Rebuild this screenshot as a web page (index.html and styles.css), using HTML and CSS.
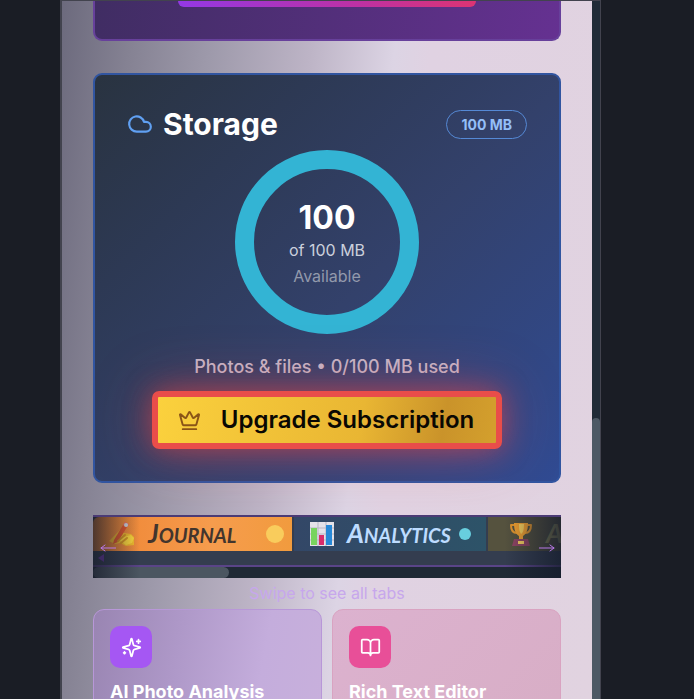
FILE: index.html
```html
<!DOCTYPE html>
<html lang="en">
<head>
<meta charset="utf-8">
<meta name="viewport" content="width=device-width, initial-scale=1">
<title>Storage</title>
<link rel="stylesheet" href="styles.css">
</head>
<body>
<div class="panel">
  <main class="content">
    <section class="promo"><div class="promo-bar"></div></section>

    <section class="storage">
      <header class="storage-head">
        <svg class="cloud" viewBox="0 0 24 24"><path d="M17.5 19H9a7 7 0 1 1 6.71-9h1.79a4.5 4.5 0 1 1 0 9Z"/></svg>
        <h2>Storage</h2>
        <span class="badge">100 MB</span>
      </header>
      <div class="ring">
        <strong>100</strong>
        <span class="ring-total">of 100 MB</span>
        <span class="ring-note">Available</span>
      </div>
      <p class="usage">Photos &amp; files • 0/100 MB used</p>
      <button class="upgrade" type="button">
        <svg class="crown" viewBox="0 0 24 24"><path d="M11.562 3.266a.5.5 0 0 1 .876 0L15.39 8.87a1 1 0 0 0 1.516.294L21.183 5.5a.5.5 0 0 1 .798.519l-2.834 10.246a1 1 0 0 1-.956.734H5.81a1 1 0 0 1-.957-.734L2.02 6.02a.5.5 0 0 1 .798-.519l4.276 3.664a1 1 0 0 0 1.516-.294z"/><path d="M5 21h14"/></svg>
        Upgrade Subscription
      </button>
    </section>

    <nav class="tabs">
      <div class="tab-row">
        <a class="tab journal" href="#journal">
          <svg class="emoji writing" viewBox="0 0 28 28"><path d="M2 21 9 14l4-4 4 3 7 1 3 3v8l-8 1-6-3-5 1z" fill="#f5bd2d"/><path d="m12 13 5 4 7-2 3 3-2 5-6 2-7-5z" fill="#ffd83c"/><path d="M7 20 16 5l4 2-9 15-5 2z" fill="#e8582d"/><path d="m16 5 2-3 4 2-2 3z" fill="#ef6c72"/><circle cx="19" cy="5" r="2" fill="#d5d9df"/><path d="m11 21 7-6M14 23l6-5" stroke="#db9722" stroke-width="2"/></svg>
          <span>Journal</span><i class="dot"></i>
        </a>
        <a class="tab analytics" href="#analytics">
          <svg class="emoji" viewBox="0 0 24 24"><path d="M0 0h24v24H0z" fill="#e4e2e9"/><path d="M8 0v24M16 0v24M0 6h24M0 12h24M0 18h24" stroke="#b9b6c5"/><path d="M1 6h6v17H1z" fill="#78d45e"/><path d="M9 13h5v10H9z" fill="#d92c6b"/><path d="M16 3h6v20h-6z" fill="#2889d8"/></svg>
          <span>Analytics</span><i class="dot"></i>
        </a>
        <a class="tab awards" href="#assets">
          <svg class="emoji" viewBox="0 0 24 24"><path d="M6 3H2c0 6 2 8 6 8M18 3h4c0 6-2 8-6 8" fill="none" stroke="#e6972d" stroke-width="2"/><path d="M5 1h14c0 8-2 11-5 13v4h-4v-4C7 12 5 9 5 1Z" fill="#f6a32f"/><path d="M10 2h5c0 6-1 9-3 10-2-3-2-6-2-10Z" fill="#ffd35a"/><path d="M5 17h14l2 7H3z" fill="#914563"/><path d="M9 19h6v3H9z" fill="#ffd460"/></svg>
          <span>As</span>
        </a>
      </div>
      <div class="tab-scroll"><div class="tab-thumb"></div></div>
      <div class="fade"></div>
      <svg class="arrow arrow-left" viewBox="0 0 16 8"><path d="M16 4H1m4-3L1 4l4 3"/></svg>
      <svg class="arrow arrow-right" viewBox="0 0 16 8"><path d="M0 4h15m-4-3 4 3-4 3"/></svg>
      <svg class="nudge" viewBox="0 0 6 8"><path d="M6 0v8L0 4z"/></svg>
    </nav>
    <p class="hint">Swipe to see all tabs</p>

    <div class="features">
      <article class="feature photo">
        <div class="tile"><svg viewBox="0 0 24 24"><path d="M9.937 15.5A2 2 0 0 0 8.5 14.063l-6.135-1.582a.5.5 0 0 1 0-.962L8.5 9.936A2 2 0 0 0 9.937 8.5l1.582-6.135a.5.5 0 0 1 .963 0L14.063 8.5A2 2 0 0 0 15.5 9.937l6.135 1.581a.5.5 0 0 1 0 .964L15.5 14.063a2 2 0 0 0-1.437 1.437l-1.582 6.135a.5.5 0 0 1-.963 0z"/><path d="M20 3v4M22 5h-4M4 17v2M5 18H3"/></svg></div>
        <h3>AI Photo Analysis</h3>
      </article>
      <article class="feature editor">
        <div class="tile"><svg viewBox="0 0 24 24"><path d="M12 7v14M3 18a1 1 0 0 1-1-1V4a1 1 0 0 1 1-1h5a4 4 0 0 1 4 4 4 4 0 0 1 4-4h5a1 1 0 0 1 1 1v13a1 1 0 0 1-1 1h-6a3 3 0 0 0-3 3 3 3 0 0 0-3-3z"/></svg></div>
        <h3>Rich Text Editor</h3>
      </article>
    </div>
  </main>
  <div class="scroll"><div class="scroll-thumb"></div></div>
</div>
</body>
</html>
```
FILE: styles.css
```css
* { box-sizing: border-box; }
body {
  margin: 0;
  padding: 0 93px 0 60px;
  height: 100vh;
  overflow: hidden;
  background: #1a1d25;
  font-family: Inter, "Liberation Sans", sans-serif;
  color: #fff;
}
h2, h3, p { margin: 0; }
svg { display: block; flex: none; fill: none; stroke-linecap: round; stroke-linejoin: round; }
.panel {
  display: flex;
  height: 100vh;
  border: solid #42434e;
  border-width: 1px 1px 0 2px;
  overflow: hidden;
}
.content {
  flex: 1;
  min-width: 0;
  padding: 0 31px;
  background: linear-gradient(96deg, #6c6a7d 0%, #858293 12%, #9d99aa 25%, #bdb4c6 42%, #dcd4e4 56%, #e0d2e2 62%, #e1d3e0 100%);
}
.scroll { width: 8px; padding-top: 417px; background: #202b37; }
.scroll-thumb { height: 100%; border-radius: 4px 4px 0 0; background: #4d5965; }

.promo {
  height: 40px;
  padding: 0 83px;
  border: 2px solid #67409b;
  border-top: 0;
  border-radius: 0 0 9px 9px;
  background: linear-gradient(100deg, #402d63, #653191);
}
.promo-bar { height: 6px; border-radius: 0 0 8px 8px; background: linear-gradient(90deg, #9338e5, #bd31a4 60%, #dc3473); }

.storage {
  display: flex;
  flex-direction: column;
  align-items: center;
  margin-top: 32px;
  padding: 31px 32px 32px;
  border: 2px solid #3155a0;
  border-radius: 9px;
  background: linear-gradient(135deg, #293340 0%, #2d3954 25%, #33416b 55%, #304b93 100%);
}
.storage-head { display: flex; align-items: center; align-self: stretch; height: 36px; }
.cloud { width: 26px; height: 26px; stroke: #60a0f2; stroke-width: 2; }
h2 { margin-left: 10px; font-size: 30px; line-height: 36px; font-weight: 700; }
.badge {
  margin-left: auto;
  padding: 0 14px;
  border: 1px solid #5589d5;
  border-radius: 15px;
  font-size: 14px;
  line-height: 27px;
  font-weight: 700;
  color: #94bff8;
}
.ring {
  display: flex;
  flex-direction: column;
  align-items: center;
  justify-content: center;
  width: 184px;
  height: 184px;
  margin-top: 8px;
  padding-top: 4px;
  border: 19px solid #33b4d4;
  border-radius: 50%;
}
.ring strong { font-size: 32px; line-height: 36px; }
.ring-total { font-size: 16px; line-height: 28px; color: #cbd0dc; }
.ring-note { font-size: 16px; line-height: 24px; color: #9299ac; }
.usage { margin-top: 19px; font-size: 18px; line-height: 28px; font-weight: 500; color: #c5b8ca; }
.upgrade {
  display: flex;
  align-items: center;
  gap: 20px;
  margin-top: 10px;
  height: 58px;
  padding: 0 22px 0 20px;
  border: 6px solid #e94d4a;
  border-radius: 7px;
  background: linear-gradient(100deg, #fbd13d, #e9b633 60%, #ca932a 84%, #d4a02d);
  box-shadow: 0 0 26px rgba(239, 68, 68, .5), 0 0 60px rgba(239, 68, 68, .38);
  font: 600 24px/30px Inter, "Liberation Sans", sans-serif;
  color: #0a0803;
}
.crown { width: 23px; height: 23px; stroke: #8a5417; stroke-width: 2; }

.tabs { position: relative; margin-top: 32px; border-top: 2px solid #4b3b75; overflow: hidden; }
.tab-row { display: flex; gap: 2px; height: 50px; padding-bottom: 14px; border-bottom: 2px solid #5a4488; background: #343d4f; }
.tab { display: flex; flex: none; align-items: center; height: 34px; font: italic 700 20px/34px Lato, sans-serif; text-transform: uppercase; text-decoration: none; }
.journal { width: 199px; padding: 0 8px 0 14px; border-radius: 6px 0 0; background: linear-gradient(90deg, #ee8433, #f69c4d 60%, #f19b3e); color: #42352d; }
.analytics { width: 192px; padding: 0 15px 0 16px; background: linear-gradient(90deg, #334767, #2d5368); color: #bddcff; }
.awards { width: 192px; padding-left: 21px; background: #55523e; color: #928d58; }
.emoji { width: 24px; height: 24px; }
.writing { width: 28px; height: 28px; }
.tab span { display: block; margin-left: 13px; }
.tab span::first-letter { font-size: 26px; }
.dot { width: 18px; height: 18px; margin-left: auto; border-radius: 50%; background: #f9cc5c; }
.analytics .dot { width: 12px; height: 12px; background: #68cede; }
.tab-scroll { height: 11px; background: #1f2935; }
.tab-thumb { width: 29%; height: 11px; border-radius: 6px; background: #4b5661; }
.fade {
  position: absolute;
  inset: 0;
  background: linear-gradient(90deg, rgba(24, 29, 44, .75), rgba(24, 29, 44, 0) 10%, rgba(24, 29, 44, 0) 88%, rgba(20, 27, 44, .75) 100%);
}
.arrow { position: absolute; top: 27px; width: 16px; height: 8px; stroke: #b878e8; stroke-width: 1; }
.arrow-left { left: 7px; }
.arrow-right { right: 6px; }
.nudge { position: absolute; top: 37px; left: 5px; width: 6px; height: 8px; fill: #3d2962; }
.hint { margin-top: 4px; font-size: 16px; line-height: 22px; text-align: center; color: #c7a7ec; }

.features { display: grid; grid-template-columns: 1fr 1fr; gap: 10px; margin-top: 5px; }
.feature { min-height: 160px; padding: 16px; border: 1px solid #b897d8; border-radius: 11px; }
.photo { background: linear-gradient(100deg, #9985b2, #ae98c8 35%, #c4addc 70%, #c8b0dc); }
.editor { border-color: #d9a3c1; background: linear-gradient(135deg, #dcb2cf, #d7adc4); }
.tile { display: grid; place-items: center; width: 42px; height: 42px; border-radius: 10px; background: #a557f3; }
.editor .tile { background: #e84f98; }
.tile svg { width: 21px; height: 21px; stroke: #fff; stroke-width: 2; }
h3 { margin-top: 12px; font-size: 18px; line-height: 24px; font-weight: 700; white-space: nowrap; }
```
